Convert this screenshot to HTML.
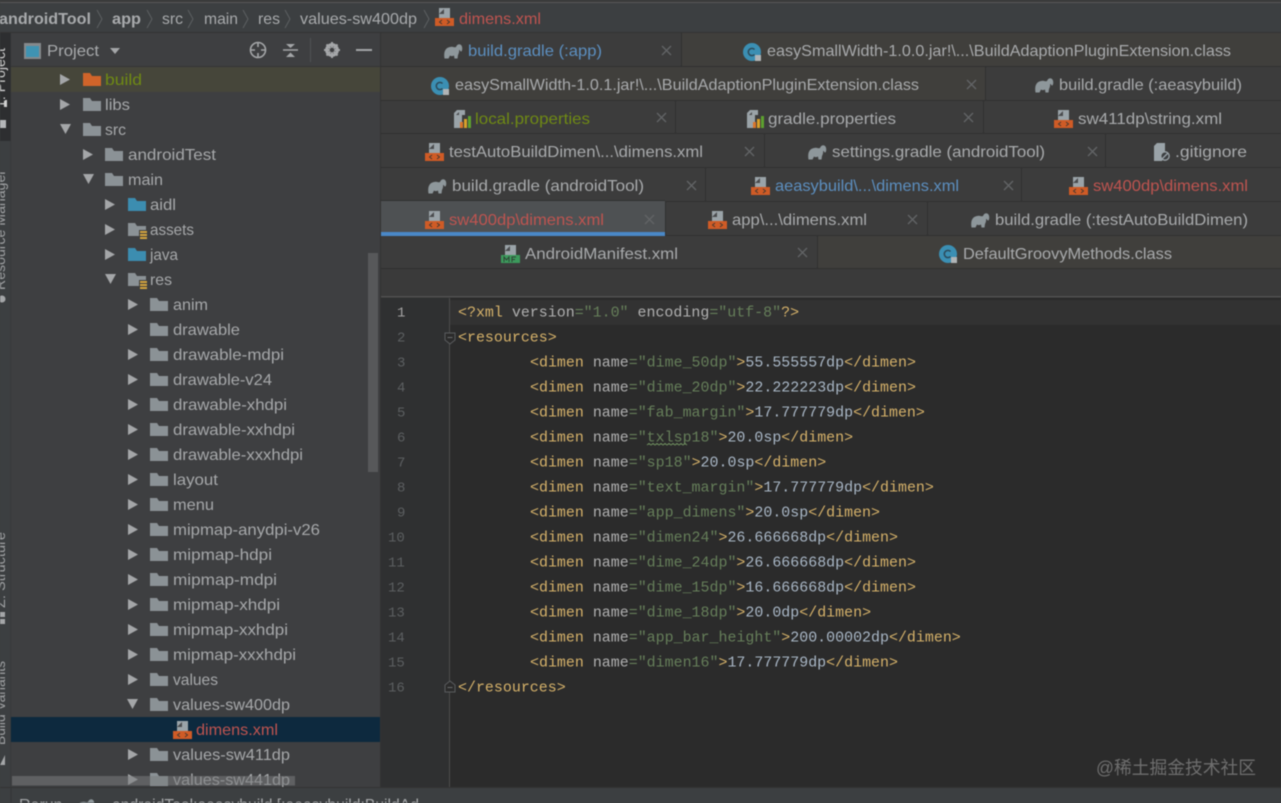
<!DOCTYPE html>
<html lang="en"><head><meta charset="utf-8"><title>androidTool</title>
<style>
html,body{margin:0;padding:0;background:#3c3f41;overflow:hidden}
svg{display:block;filter:blur(.4px)}
text{font-family:"Liberation Sans",sans-serif;font-size:16px;fill:#a8aaac;white-space:pre}
.t{fill:#a6a8aa}
.m{font-family:"Liberation Mono",monospace;font-size:14.96px;fill:#a9b7c6}
.n{font-family:"Liberation Mono",monospace;font-size:14px;fill:#5c5f61}
.y{fill:#d6b26a}.a{fill:#b0b0b0}.s{fill:#667f5a}
.b{fill:#5c8fc0}.r{fill:#bf5450}.g{fill:#6f8a14}
.x{stroke:#626466;stroke-width:1.3;fill:none}
</style></head><body>
<svg width="1281" height="803" viewBox="0 0 1281 803" xmlns="http://www.w3.org/2000/svg">
<defs>
<g id="xml"><path d="M4 0H15V10H4Z" fill="#9aa3a8"/><path d="M4 6L9 1V6Z" fill="#4a4c4e"/><rect x="0" y="10" width="19" height="8" fill="#cf5b26"/><path d="M7 12L4.500 14L7 16M12 12L14.500 14L12 16" fill="none" stroke="#4a3a30" stroke-width="1"/></g>
<g id="mf"><path d="M4 0H15V10H4Z" fill="#9aa3a8"/><path d="M4 6L9 1V6Z" fill="#4a4c4e"/><rect x="0" y="10" width="19" height="8" fill="#3c9a5c"/><path d="M3 17V12L5.500 15L8 12V17M11 17V12H15M11 14.500H14" fill="none" stroke="#2e4436" stroke-width="1"/></g>
<path id="ele" d="M0.500 14.500C-0.500 8 1 4 6 3C9 2 10 4 12 3C13 0 16 -1 17.800 2C18.800 5 18 7.500 17 7.500C16 7.500 16 5.500 15.200 6C15.200 8.500 14.500 10 14 11L13.500 14.500H10.500L10 11.500C8.500 12.300 7 12.300 6 11.500L4.500 14.500Z" fill="#8e979b"/>
<g id="c"><circle cx="9" cy="9" r="9" fill="#3b8fb3"/><path d="M11.500 6.500A3.600 3.600 0 1 0 11.500 11.500" fill="none" stroke="#2c4a5a" stroke-width="1.500"/><rect x="12" y="12" width="6" height="6" fill="#b0b4b6"/></g>
<g id="prop"><path d="M0 3L3 0H11V5H8V18H0Z" fill="#9aa3a8"/><path d="M2 5L5 2V5Z" fill="#4a4c4e"/><rect x="6" y="12" width="3" height="6" fill="#d9752a"/><rect x="10" y="9" width="3" height="9" fill="#d9a02a"/><rect x="14" y="6" width="3" height="12" fill="#5da02f"/></g>
<g id="git"><path d="M0 3L3 0H11V12L8 18H0Z" fill="#9aa3a8"/><circle cx="11" cy="13" r="4.200" fill="#3c3f41" stroke="#9aa3a8" stroke-width="1.300"/><path d="M8 16L14 10" stroke="#9aa3a8" stroke-width="1.300"/></g>
<path id="fo" d="M0 0H7L9 3H18V13H0Z"/>
<g id="fg"><use href="#fo" fill="#8b9296"/></g>
<g id="fb"><use href="#fo" fill="#3c8db0"/></g>
<g id="fr"><use href="#fo" fill="#8b9296"/><rect x="11" y="7" width="8" height="10" fill="#3e3f41"/><path d="M12 9H19M12 12H19M12 15H19" stroke="#d2a43e" stroke-width="2"/></g>
<path id="ar" d="M0 0L10 5.500L0 11Z" fill="#a4a6a8"/>
<path id="ad" d="M0 0H11L5.500 10Z" fill="#a4a6a8"/>
<path id="xx" d="M0 0L9 9M9 0L0 9" class="x"/>
<path id="ch" d="M0 0L5 9L0 18" fill="none" stroke="#5d6062" stroke-width="1"/>
</defs>

<!-- base -->
<rect width="1281" height="803" fill="#3c3f41"/>
<rect y="0" width="1281" height="2" fill="#3a3a3a"/>
<rect y="2" width="1281" height="1" fill="#585858"/>
<rect y="32" width="1281" height="1" fill="#333"/>

<!-- breadcrumb -->
<text x="-1" y="24" textLength="92" lengthAdjust="spacingAndGlyphs" font-weight="bold">androidTool</text>
<use href="#ch" x="97" y="10"/>
<text x="112" y="24" textLength="29" lengthAdjust="spacingAndGlyphs" font-weight="bold">app</text>
<use href="#ch" x="147" y="10"/>
<text x="162" y="24" textLength="21" lengthAdjust="spacingAndGlyphs">src</text>
<use href="#ch" x="188" y="10"/>
<text x="204" y="24" textLength="34" lengthAdjust="spacingAndGlyphs">main</text>
<use href="#ch" x="243" y="10"/>
<text x="258" y="24" textLength="22" lengthAdjust="spacingAndGlyphs">res</text>
<use href="#ch" x="285" y="10"/>
<text x="300" y="24" textLength="117" lengthAdjust="spacingAndGlyphs">values-sw400dp</text>
<use href="#ch" x="424" y="10"/>
<use href="#xml" x="435" y="8"/>
<text x="459" y="24" textLength="82" lengthAdjust="spacingAndGlyphs" class="r">dimens.xml</text>

<!-- left strip -->
<rect x="0" y="33" width="11" height="754" fill="#3c3f41"/>
<rect x="0" y="33" width="11" height="108" fill="#2d2e30"/>
<rect x="10.500" y="33" width="1" height="754" fill="#333537"/>
<g style="font-size:14px">
<text transform="translate(5,108) rotate(-90)" textLength="60" lengthAdjust="spacingAndGlyphs" style="font-size:14px;fill:#d0d0d0">1: Project</text>
<text transform="translate(5,290) rotate(-90)" textLength="120" lengthAdjust="spacingAndGlyphs" style="font-size:14px;fill:#a0a2a4">Resource Manager</text>
<text transform="translate(5,608) rotate(-90)" textLength="76" lengthAdjust="spacingAndGlyphs" style="font-size:14px;fill:#a0a2a4">Z: Structure</text>
<text transform="translate(5,745) rotate(-90)" textLength="84" lengthAdjust="spacingAndGlyphs" style="font-size:14px;fill:#a0a2a4">Build Variants</text>
</g>
<rect x="5" y="100" width="2" height="7" fill="#d0d0d0"/>
<rect x="0" y="120" width="6" height="8" fill="#b4b6b8"/>
<circle cx="2" cy="299" r="3.500" fill="#a4a6a8"/>
<rect x="0" y="612" width="5" height="5" fill="#a4a6a8"/><rect x="0" y="619" width="5" height="5" fill="#a4a6a8"/>
<path d="M0 765L5 755V765Z" fill="#a4a6a8"/>

<!-- project panel -->
<rect x="11" y="33" width="369" height="754" fill="#3e3f41"/>
<rect x="11" y="66" width="369" height="1" fill="#343536"/>
<rect x="24" y="43" width="17" height="16" fill="#85898c"/><rect x="26" y="46" width="13" height="11" fill="#3f93b2"/>
<text x="47" y="56" textLength="52" lengthAdjust="spacingAndGlyphs">Project</text>
<path d="M110 48H120L115 54Z" fill="#a4a6a8"/>
<circle cx="258" cy="50" r="7.500" fill="none" stroke="#a4a6a8" stroke-width="1.600"/>
<path d="M258 42V47M258 53V58M250 50H255M261 50H266" stroke="#a4a6a8" stroke-width="1.600"/>
<path d="M283 50H298" stroke="#a4a6a8" stroke-width="1.500"/>
<path d="M286 44H295L290.500 48ZM286 57H295L290.500 52.500Z" fill="#a4a6a8"/>
<rect x="310" y="38" width="1" height="24" fill="#505254"/>
<circle cx="332" cy="50" r="5.300" fill="none" stroke="#a4a6a8" stroke-width="3.200"/>
<path d="M332 42V58M324 50H340M326.500 44.500L337.500 55.500M337.500 44.500L326.500 55.500" stroke="#a4a6a8" stroke-width="2"/>
<circle cx="332" cy="50" r="2.300" fill="#3e3f41"/>
<rect x="356" y="49" width="16" height="2" fill="#a4a6a8"/>

<rect x="11" y="67" width="369" height="25" fill="#46463a"/>
<rect x="11" y="717" width="369" height="25" fill="#0d293e"/>

<!-- tree -->
<use href="#ar" x="60" y="74"/><use href="#fo" x="83" y="73" fill="#d0642a"/><text x="105" y="85" textLength="37" lengthAdjust="spacingAndGlyphs" class="g">build</text>
<use href="#ar" x="60" y="99"/><use href="#fg" x="83" y="98"/><text x="105" y="110" textLength="25" lengthAdjust="spacingAndGlyphs" class="t">libs</text>
<use href="#ad" x="60" y="124"/><use href="#fg" x="83" y="123"/><text x="105" y="135" textLength="21" lengthAdjust="spacingAndGlyphs" class="t">src</text>
<use href="#ar" x="83" y="149"/><use href="#fg" x="105" y="148"/><text x="128" y="160" textLength="88" lengthAdjust="spacingAndGlyphs" class="t">androidTest</text>
<use href="#ad" x="83" y="174"/><use href="#fg" x="105" y="173"/><text x="128" y="185" textLength="35" lengthAdjust="spacingAndGlyphs" class="t">main</text>
<use href="#ar" x="105" y="199"/><use href="#fb" x="128" y="198"/><text x="150" y="210" textLength="26" lengthAdjust="spacingAndGlyphs" class="t">aidl</text>
<use href="#ar" x="105" y="224"/><use href="#fr" x="128" y="223"/><text x="150" y="235" textLength="44" lengthAdjust="spacingAndGlyphs" class="t">assets</text>
<use href="#ar" x="105" y="249"/><use href="#fb" x="128" y="248"/><text x="150" y="260" textLength="28" lengthAdjust="spacingAndGlyphs" class="t">java</text>
<use href="#ad" x="105" y="274"/><use href="#fr" x="128" y="273"/><text x="150" y="285" textLength="22" lengthAdjust="spacingAndGlyphs" class="t">res</text>

<use href="#ar" x="128" y="299"/><use href="#fg" x="150" y="298"/><text x="173" y="310" textLength="35" lengthAdjust="spacingAndGlyphs" class="t">anim</text>
<use href="#ar" x="128" y="324"/><use href="#fg" x="150" y="323"/><text x="173" y="335" textLength="67" lengthAdjust="spacingAndGlyphs" class="t">drawable</text>
<use href="#ar" x="128" y="349"/><use href="#fg" x="150" y="348"/><text x="173" y="360" textLength="111" lengthAdjust="spacingAndGlyphs" class="t">drawable-mdpi</text>
<use href="#ar" x="128" y="374"/><use href="#fg" x="150" y="373"/><text x="173" y="385" textLength="99" lengthAdjust="spacingAndGlyphs" class="t">drawable-v24</text>
<use href="#ar" x="128" y="399"/><use href="#fg" x="150" y="398"/><text x="173" y="410" textLength="114" lengthAdjust="spacingAndGlyphs" class="t">drawable-xhdpi</text>
<use href="#ar" x="128" y="424"/><use href="#fg" x="150" y="423"/><text x="173" y="435" textLength="122" lengthAdjust="spacingAndGlyphs" class="t">drawable-xxhdpi</text>
<use href="#ar" x="128" y="449"/><use href="#fg" x="150" y="448"/><text x="173" y="460" textLength="130" lengthAdjust="spacingAndGlyphs" class="t">drawable-xxxhdpi</text>
<use href="#ar" x="128" y="474"/><use href="#fg" x="150" y="473"/><text x="173" y="485" textLength="45" lengthAdjust="spacingAndGlyphs" class="t">layout</text>
<use href="#ar" x="128" y="499"/><use href="#fg" x="150" y="498"/><text x="173" y="510" textLength="41" lengthAdjust="spacingAndGlyphs" class="t">menu</text>
<use href="#ar" x="128" y="524"/><use href="#fg" x="150" y="523"/><text x="173" y="535" textLength="147" lengthAdjust="spacingAndGlyphs" class="t">mipmap-anydpi-v26</text>
<use href="#ar" x="128" y="549"/><use href="#fg" x="150" y="548"/><text x="173" y="560" textLength="99" lengthAdjust="spacingAndGlyphs" class="t">mipmap-hdpi</text>
<use href="#ar" x="128" y="574"/><use href="#fg" x="150" y="573"/><text x="173" y="585" textLength="104" lengthAdjust="spacingAndGlyphs" class="t">mipmap-mdpi</text>
<use href="#ar" x="128" y="599"/><use href="#fg" x="150" y="598"/><text x="173" y="610" textLength="107" lengthAdjust="spacingAndGlyphs" class="t">mipmap-xhdpi</text>
<use href="#ar" x="128" y="624"/><use href="#fg" x="150" y="623"/><text x="173" y="635" textLength="115" lengthAdjust="spacingAndGlyphs" class="t">mipmap-xxhdpi</text>
<use href="#ar" x="128" y="649"/><use href="#fg" x="150" y="648"/><text x="173" y="660" textLength="123" lengthAdjust="spacingAndGlyphs" class="t">mipmap-xxxhdpi</text>
<use href="#ar" x="128" y="674"/><use href="#fg" x="150" y="673"/><text x="173" y="685" textLength="45" lengthAdjust="spacingAndGlyphs" class="t">values</text>
<use href="#ad" x="127" y="699"/><use href="#fg" x="150" y="698"/><text x="173" y="710" textLength="117" lengthAdjust="spacingAndGlyphs" class="t">values-sw400dp</text>
<use href="#xml" x="173" y="721"/><text x="196" y="735" textLength="82" lengthAdjust="spacingAndGlyphs" class="r">dimens.xml</text>
<use href="#ar" x="128" y="749"/><use href="#fg" x="150" y="748"/><text x="173" y="760" textLength="117" lengthAdjust="spacingAndGlyphs" class="t">values-sw411dp</text>
<use href="#ar" x="128" y="774"/><use href="#fg" x="150" y="773"/><text x="173" y="785" textLength="117" lengthAdjust="spacingAndGlyphs" class="t">values-sw441dp</text>
<rect x="12" y="776" width="283" height="9.500" fill="#7a7c7e" opacity=".55"/>
<rect x="368" y="253" width="10" height="219" fill="#57585a"/>

<!-- tabs -->
<rect x="380" y="33" width="901" height="236" fill="#3c3c3c"/>
<rect x="380" y="33" width="1" height="754" fill="#333"/>
<rect x="681" y="33" width="600" height="33" fill="#403f3c"/>
<rect x="381" y="67" width="604" height="33" fill="#403f3c"/>
<rect x="817" y="235" width="464" height="34" fill="#403f3c"/>
<rect x="381" y="201" width="284" height="32" fill="#4e5153"/>
<rect x="381" y="232" width="284" height="4" fill="#4a88c7"/>
<g fill="#303030">
<rect x="381" y="66" width="900" height="1"/><rect x="381" y="100" width="900" height="1"/><rect x="381" y="133" width="900" height="1"/><rect x="381" y="167" width="900" height="1"/><rect x="665" y="201" width="616" height="1"/><rect x="381" y="200" width="284" height="1"/><rect x="665" y="235" width="616" height="1"/><rect x="381" y="268" width="900" height="1"/>
<rect x="681" y="33" width="1" height="33"/><rect x="985" y="67" width="1" height="33"/><rect x="675" y="100" width="1" height="33"/><rect x="983" y="100" width="1" height="33"/><rect x="764" y="134" width="1" height="33"/><rect x="1105" y="134" width="1" height="33"/><rect x="705" y="168" width="1" height="33"/><rect x="1021" y="168" width="1" height="33"/><rect x="665" y="201" width="1" height="34"/><rect x="927" y="201" width="1" height="34"/><rect x="817" y="235" width="1" height="34"/>
</g>

<use href="#ele" x="444" y="44"/><text x="468" y="56" textLength="134" lengthAdjust="spacingAndGlyphs" class="b">build.gradle (:app)</text><use href="#xx" x="662" y="46"/>
<use href="#c" x="743" y="43"/><text x="767" y="56" textLength="464" lengthAdjust="spacingAndGlyphs">easySmallWidth-1.0.0.jar!\...\BuildAdaptionPluginExtension.class</text>

<use href="#c" x="431" y="77"/><text x="455" y="90" textLength="464" lengthAdjust="spacingAndGlyphs">easySmallWidth-1.0.1.jar!\...\BuildAdaptionPluginExtension.class</text><use href="#xx" x="967" y="80"/>
<use href="#ele" x="1035" y="78"/><text x="1059" y="90" textLength="183" lengthAdjust="spacingAndGlyphs">build.gradle (:aeasybuild)</text>

<use href="#prop" x="454" y="110"/><text x="475" y="124" textLength="115" lengthAdjust="spacingAndGlyphs" class="g">local.properties</text><use href="#xx" x="657" y="113"/>
<use href="#prop" x="747" y="110"/><text x="768" y="124" textLength="128" lengthAdjust="spacingAndGlyphs">gradle.properties</text><use href="#xx" x="964" y="113"/>
<use href="#xml" x="1054" y="110"/><text x="1078" y="124" textLength="144" lengthAdjust="spacingAndGlyphs">sw411dp\string.xml</text>

<use href="#xml" x="425" y="143"/><text x="449" y="157" textLength="254" lengthAdjust="spacingAndGlyphs">testAutoBuildDimen\...\dimens.xml</text><use href="#xx" x="745" y="147"/>
<use href="#ele" x="808" y="145"/><text x="832" y="157" textLength="213" lengthAdjust="spacingAndGlyphs">settings.gradle (androidTool)</text><use href="#xx" x="1088" y="147"/>
<use href="#git" x="1154" y="143"/><text x="1175" y="157" textLength="72" lengthAdjust="spacingAndGlyphs">.gitignore</text>

<use href="#ele" x="428" y="179"/><text x="452" y="191" textLength="192" lengthAdjust="spacingAndGlyphs">build.gradle (androidTool)</text><use href="#xx" x="687" y="181"/>
<use href="#xml" x="751" y="177"/><text x="775" y="191" textLength="184" lengthAdjust="spacingAndGlyphs" class="b">aeasybuild\...\dimens.xml</text><use href="#xx" x="1004" y="181"/>
<use href="#xml" x="1069" y="177"/><text x="1093" y="191" textLength="155" lengthAdjust="spacingAndGlyphs" class="r">sw400dp\dimens.xml</text>

<use href="#xml" x="425" y="211"/><text x="449" y="225" textLength="155" lengthAdjust="spacingAndGlyphs" class="r">sw400dp\dimens.xml</text><use href="#xx" x="645" y="215"/>
<use href="#xml" x="708" y="211"/><text x="732" y="225" textLength="135" lengthAdjust="spacingAndGlyphs">app\...\dimens.xml</text><use href="#xx" x="908" y="215"/>
<use href="#ele" x="971" y="213"/><text x="995" y="225" textLength="253" lengthAdjust="spacingAndGlyphs">build.gradle (:testAutoBuildDimen)</text>

<use href="#mf" x="501" y="245"/><text x="525" y="259" textLength="153" lengthAdjust="spacingAndGlyphs">AndroidManifest.xml</text><use href="#xx" x="798" y="248"/>
<use href="#c" x="939" y="245"/><text x="963" y="259" textLength="209" lengthAdjust="spacingAndGlyphs">DefaultGroovyMethods.class</text>

<!-- empty strip -->
<rect x="381" y="269" width="900" height="28" fill="#3a3a3a"/>
<rect x="381" y="296" width="900" height="1.500" fill="#505050"/>

<!-- editor -->
<rect x="381" y="297.500" width="900" height="489.500" fill="#2b2b2b"/>
<rect x="381" y="297.500" width="68" height="489.500" fill="#2f3031"/>
<rect x="449" y="300" width="832" height="25" fill="#323232"/>
<rect x="449" y="298" width="1" height="489" fill="#4c4c4c"/>

<g transform="translate(0,-0.6)">
<text class="n" x="397" y="317" style="fill:#a4a3a3">1</text>
<text class="n" x="397" y="342">2</text>
<text class="n" x="397" y="367">3</text>
<text class="n" x="397" y="392">4</text>
<text class="n" x="397" y="417">5</text>
<text class="n" x="397" y="442">6</text>
<text class="n" x="397" y="467">7</text>
<text class="n" x="397" y="492">8</text>
<text class="n" x="397" y="517">9</text>
<text class="n" x="388" y="542">10</text>
<text class="n" x="388" y="567">11</text>
<text class="n" x="388" y="592">12</text>
<text class="n" x="388" y="617">13</text>
<text class="n" x="388" y="642">14</text>
<text class="n" x="388" y="667">15</text>
<text class="n" x="388" y="692">16</text>

<text class="m" x="458" y="317"><tspan class="y">&lt;?xml</tspan> <tspan class="a">version</tspan><tspan class="s">="1.0"</tspan> <tspan class="a">encoding</tspan><tspan class="s">="utf-8"</tspan><tspan class="y">?&gt;</tspan></text>
<text class="m y" x="458" y="342">&lt;resources&gt;</text>
<text class="m" x="530" y="367"><tspan class="y">&lt;dimen</tspan> <tspan class="a">name</tspan><tspan class="s">="dime_50dp"</tspan><tspan class="y">&gt;</tspan>55.555557dp<tspan class="y">&lt;/dimen&gt;</tspan></text>
<text class="m" x="530" y="392"><tspan class="y">&lt;dimen</tspan> <tspan class="a">name</tspan><tspan class="s">="dime_20dp"</tspan><tspan class="y">&gt;</tspan>22.222223dp<tspan class="y">&lt;/dimen&gt;</tspan></text>
<text class="m" x="530" y="417"><tspan class="y">&lt;dimen</tspan> <tspan class="a">name</tspan><tspan class="s">="fab_margin"</tspan><tspan class="y">&gt;</tspan>17.777779dp<tspan class="y">&lt;/dimen&gt;</tspan></text>
<text class="m" x="530" y="442"><tspan class="y">&lt;dimen</tspan> <tspan class="a">name</tspan><tspan class="s">="txlsp18"</tspan><tspan class="y">&gt;</tspan>20.0sp<tspan class="y">&lt;/dimen&gt;</tspan></text>
<text class="m" x="530" y="467"><tspan class="y">&lt;dimen</tspan> <tspan class="a">name</tspan><tspan class="s">="sp18"</tspan><tspan class="y">&gt;</tspan>20.0sp<tspan class="y">&lt;/dimen&gt;</tspan></text>
<text class="m" x="530" y="492"><tspan class="y">&lt;dimen</tspan> <tspan class="a">name</tspan><tspan class="s">="text_margin"</tspan><tspan class="y">&gt;</tspan>17.777779dp<tspan class="y">&lt;/dimen&gt;</tspan></text>
<text class="m" x="530" y="517"><tspan class="y">&lt;dimen</tspan> <tspan class="a">name</tspan><tspan class="s">="app_dimens"</tspan><tspan class="y">&gt;</tspan>20.0sp<tspan class="y">&lt;/dimen&gt;</tspan></text>
<text class="m" x="530" y="542"><tspan class="y">&lt;dimen</tspan> <tspan class="a">name</tspan><tspan class="s">="dimen24"</tspan><tspan class="y">&gt;</tspan>26.666668dp<tspan class="y">&lt;/dimen&gt;</tspan></text>
<text class="m" x="530" y="567"><tspan class="y">&lt;dimen</tspan> <tspan class="a">name</tspan><tspan class="s">="dime_24dp"</tspan><tspan class="y">&gt;</tspan>26.666668dp<tspan class="y">&lt;/dimen&gt;</tspan></text>
<text class="m" x="530" y="592"><tspan class="y">&lt;dimen</tspan> <tspan class="a">name</tspan><tspan class="s">="dime_15dp"</tspan><tspan class="y">&gt;</tspan>16.666668dp<tspan class="y">&lt;/dimen&gt;</tspan></text>
<text class="m" x="530" y="617"><tspan class="y">&lt;dimen</tspan> <tspan class="a">name</tspan><tspan class="s">="dime_18dp"</tspan><tspan class="y">&gt;</tspan>20.0dp<tspan class="y">&lt;/dimen&gt;</tspan></text>
<text class="m" x="530" y="642"><tspan class="y">&lt;dimen</tspan> <tspan class="a">name</tspan><tspan class="s">="app_bar_height"</tspan><tspan class="y">&gt;</tspan>200.00002dp<tspan class="y">&lt;/dimen&gt;</tspan></text>
<text class="m" x="530" y="667"><tspan class="y">&lt;dimen</tspan> <tspan class="a">name</tspan><tspan class="s">="dimen16"</tspan><tspan class="y">&gt;</tspan>17.777779dp<tspan class="y">&lt;/dimen&gt;</tspan></text>
<text class="m y" x="458" y="692">&lt;/resources&gt;</text>
</g>

<path d="M445 333H455V340L450 344L445 340Z" fill="#2b2b2b" stroke="#5a5c5e"/><path d="M447.500 337.500H452.500" stroke="#6a6c6e"/>
<path d="M445 692H455V685L450 681L445 685Z" fill="#2b2b2b" stroke="#5a5c5e"/><path d="M447.500 687.500H452.500" stroke="#6a6c6e"/>
<path d="M647 445l2-1.500 2 1.500 2-1.500 2 1.500 2-1.500 2 1.500 2-1.500 2 1.500 2-1.500 2 1.500 2-1.500 2 1.500 2-1.500 2 1.500 2-1.500 2 1.500 2-1.500 2 1.500 2-1.500 2 1.500" fill="none" stroke="#6f8f5f" stroke-width="1"/>

<!-- watermark -->
<text x="1096" y="774" textLength="160" lengthAdjust="spacingAndGlyphs" style="font-family:'Liberation Sans','Noto Sans CJK SC',sans-serif;font-size:18px;fill:#6e6e6e">@稀土掘金技术社区</text>

<!-- status bar -->
<rect y="787" width="1281" height="16" fill="#3c3f41"/>
<rect y="787" width="1281" height="1" fill="#333"/>
<rect x="10.500" y="787" width="1" height="16" fill="#333537"/>
<use href="#ele" x="76" y="799"/>
<text x="19" y="810" class="t">Rerun</text>
<text x="112" y="810" textLength="320" lengthAdjust="spacingAndGlyphs" class="t">androidTool:aeasybuild [:aeasybuild:BuildAd...</text>
</svg>
</body></html>
